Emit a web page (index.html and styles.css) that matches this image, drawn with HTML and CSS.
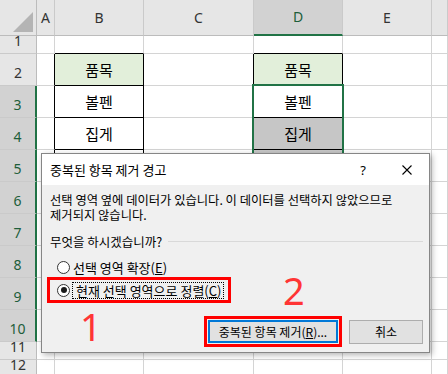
FILE: index.html
```html
<!DOCTYPE html>
<html>

<head>
    <meta charset="UTF-8">
    <title>중복된 항목 제거 경고</title>
    <link rel="stylesheet" href="styles.css">
</head>

<body>

    <div class="sheet">
        <!-- column headers -->
        <div class="c hd corner"><svg width="37" height="35"><polygon points="13,32 33,12 33,32" fill="#b4b4b4" /></svg></div>
        <div class="c hd">A</div>
        <div class="c hd">B</div>
        <div class="c hd">C</div>
        <div class="c hd hd-sel">D</div>
        <div class="c hd">E</div>
        <div class="c hd"></div>

        <!-- 1 -->
        <div class="c rh">1</div>
        <div class="c"></div>
        <div class="c tb"></div>
        <div class="c"></div>
        <div class="c tb"></div>
        <div class="c"></div>
        <div class="c"></div>

        <!-- 2 -->
        <div class="c rh">2</div>
        <div class="c lb"></div>
        <div class="c box head">품목</div>
        <div class="c lb"></div>
        <div class="c box head">품목</div>
        <div class="c"></div>
        <div class="c"></div>

        <!-- 3 -->
        <div class="c rh rh-sel">3</div>
        <div class="c lb"></div>
        <div class="c box">볼펜</div>
        <div class="c lb"></div>
        <div class="c box">볼펜</div>
        <div class="c"></div>
        <div class="c"></div>

        <!-- 4 -->
        <div class="c rh rh-sel">4</div>
        <div class="c lb"></div>
        <div class="c box">집게</div>
        <div class="c lb"></div>
        <div class="c box dim">집게</div>
        <div class="c"></div>
        <div class="c"></div>

        <!-- 5 -->
        <div class="c rh rh-sel">5</div>
        <div class="c lb"></div>
        <div class="c box"></div>
        <div class="c lb"></div>
        <div class="c box dim"></div>
        <div class="c"></div>
        <div class="c"></div>

        <!-- 6 -->
        <div class="c rh rh-sel">6</div>
        <div class="c"></div>
        <div class="c"></div>
        <div class="c"></div>
        <div class="c dim"></div>
        <div class="c"></div>
        <div class="c"></div>

        <!-- 7 -->
        <div class="c rh rh-sel">7</div>
        <div class="c"></div>
        <div class="c"></div>
        <div class="c"></div>
        <div class="c dim"></div>
        <div class="c"></div>
        <div class="c"></div>

        <!-- 8 -->
        <div class="c rh rh-sel">8</div>
        <div class="c"></div>
        <div class="c"></div>
        <div class="c"></div>
        <div class="c dim"></div>
        <div class="c"></div>
        <div class="c"></div>

        <!-- 9 -->
        <div class="c rh rh-sel">9</div>
        <div class="c"></div>
        <div class="c"></div>
        <div class="c"></div>
        <div class="c dim"></div>
        <div class="c"></div>
        <div class="c"></div>

        <!-- 10 -->
        <div class="c rh rh-sel">10</div>
        <div class="c"></div>
        <div class="c"></div>
        <div class="c"></div>
        <div class="c dim"></div>
        <div class="c"></div>
        <div class="c"></div>

        <!-- 11 -->
        <div class="c rh">11</div>
        <div class="c"></div>
        <div class="c"></div>
        <div class="c"></div>
        <div class="c"></div>
        <div class="c"></div>
        <div class="c"></div>

        <!-- 12 -->
        <div class="c rh">12</div>
        <div class="c"></div>
        <div class="c"></div>
        <div class="c"></div>
        <div class="c"></div>
        <div class="c"></div>
        <div class="c"></div>
    </div>

    <!-- selected range D3:D10 -->
    <div class="selection"></div>

    <div class="dlg">
        <div class="dlg-title">
            <span>중복된 항목 제거 경고</span>
            <span class="help">?</span>
            <svg class="close" width="10" height="10"><path d="M0.5 0.5L9.5 9.5M9.5 0.5L0.5 9.5" stroke="#000" stroke-width="1.1" fill="none" /></svg>
        </div>

        <div class="dlg-body">
            <div class="msg">선택 영역 옆에 데이터가 있습니다. 이 데이터를 선택하지 않았으므로</div>
            <div class="msg">제거되지 않습니다.</div>

            <div class="group"><span>무엇을 하시겠습니까?</span><i class="rule"></i></div>

            <div class="opt"><span class="radio"></span>선택 영역 확장(<u>E</u>)</div>
            <div class="opt picked"><span class="radio on"></span><span class="focus">현재 선택 영역으로 정렬(<u>C</u>)</span></div>

            <div class="actions">
                <span class="mark"><button class="btn def">중복된 항목 제거(<u>R</u>)...</button></span>
                <button class="btn">취소</button>
            </div>
        </div>

        <span class="num n1">1</span>
        <span class="num n2">2</span>
    </div>

</body>

</html>
```

FILE: styles.css
```css
* {
    box-sizing: border-box;
}

body {
    margin: 0;
    width: 448px;
    height: 374px;
    overflow: hidden;
    position: relative;
    background: #fff;
    font-family: "Noto Sans CJK KR", sans-serif;
    color: #000;
}

/* worksheet */

.sheet {
    display: grid;
    grid-template-columns: 37px 18px 89px 110px 89px 89px 16px;
    grid-template-rows: 36px 18px repeat(9, 32px) 18px 18px;
}

.c {
    display: flex;
    align-items: center;
    justify-content: center;
    border-right: 1px solid #d4d4d4;
    border-bottom: 1px solid #d4d4d4;
    font-size: 15px;
    line-height: 18px;
}

.hd {
    background: #e6e6e6;
    border-right-color: #cacaca;
    border-bottom-color: #bcbcbc;
    font-family: "Noto Sans", sans-serif;
    font-size: 14px;
    color: #333;
}

.corner {
    border-right-color: #bcbcbc;
    align-items: flex-start;
}

.corner svg {
    display: block;
}

.hd-sel {
    background: #d2d2d2;
    color: #1d5e3a;
    border-bottom: 2px solid #217346;
}

.rh {
    background: #e6e6e6;
    border-right-color: #bcbcbc;
    border-bottom-color: #cacaca;
    align-items: flex-end;
    padding-bottom: 4px;
    font-family: "Noto Sans", sans-serif;
    font-size: 14px;
    line-height: 16px;
    color: #333;
}

.rh-sel {
    background: #d2d2d2;
    color: #1d5e3a;
    border-right: 2px solid #217346;
}

.tb {
    border-bottom-color: #000;
}

.lb {
    border-right-color: #000;
}

.box {
    border-right-color: #000;
    border-bottom-color: #000;
}

.head {
    background: #e2efda;
}

.dim {
    background: #c6c6c6;
}

.selection {
    position: absolute;
    left: 252px;
    top: 84px;
    width: 92px;
    height: 258px;
    border: 2px solid #217346;
}

/* dialog */

.dlg {
    position: absolute;
    left: 41px;
    top: 153px;
    width: 389px;
    height: 200px;
    background: #f0f0f0;
    border: 1px solid #868686;
    box-shadow: 2px 2px 6px rgba(0, 0, 0, 0.3);
    font-size: 12px;
}

.dlg-title {
    display: flex;
    align-items: center;
    height: 31px;
    padding-left: 8px;
    background: #fff;
    font-size: 13px;
}

.help {
    margin-left: auto;
    margin-right: 36px;
    font-family: "Noto Sans", sans-serif;
    font-size: 13px;
}

.close {
    margin-right: 17px;
}

.dlg-body {
    padding: 8px 6px 0 8px;
}

.msg {
    height: 14px;
    font-size: 12.3px;
    line-height: 14px;
}

.msg:first-child {
    height: 15px;
}

.group {
    display: flex;
    align-items: center;
    margin-top: 12px;
    font-size: 12.5px;
    line-height: 15px;
}

.rule {
    flex: 1;
    height: 1px;
    margin-left: 6px;
    background: #d9d9d9;
}

.opt {
    display: flex;
    align-items: center;
    height: 20px;
    margin: 8px 0 0 -3px;
    padding-left: 7px;
    border: 3px solid transparent;
    font-size: 13px;
    line-height: 15px;
}

.picked {
    width: 184px;
    height: 26px;
    margin-top: 0;
    border-color: #f00;
}

.radio {
    width: 13px;
    height: 13px;
    margin-right: 3px;
    border: 1px solid #333;
    border-radius: 50%;
    background: #fff;
    flex: none;
    display: flex;
    align-items: center;
    justify-content: center;
}

.radio.on::after {
    content: "";
    width: 6px;
    height: 6px;
    border-radius: 50%;
    background: #1a1a1a;
}

.focus {
    margin-left: -1px;
    padding: 0 2px 0 3px;
    border: 1px dotted #000;
}

.actions {
    display: flex;
    align-items: center;
    justify-content: flex-end;
    gap: 7px;
    margin-top: 13px;
}

.mark {
    display: flex;
    padding: 1px;
    border: 3px solid #f00;
}

.btn {
    height: 24px;
    padding: 0;
    border: 1px solid #adadad;
    background: #e1e1e1;
    font-family: "Noto Sans CJK KR", sans-serif;
    font-size: 12px;
    color: #000;
}

.btn.def {
    width: 130px;
    height: 23px;
    border: 2px solid #0078d7;
}

.actions > .btn {
    width: 74px;
}

/* annotations */

.num {
    position: absolute;
    font-family: "Noto Sans", sans-serif;
    font-size: 38px;
    line-height: 1;
    color: #ff3535;
}

.n1 {
    left: 38px;
    top: 153px;
}

.n2 {
    left: 241px;
    top: 117px;
}
```
